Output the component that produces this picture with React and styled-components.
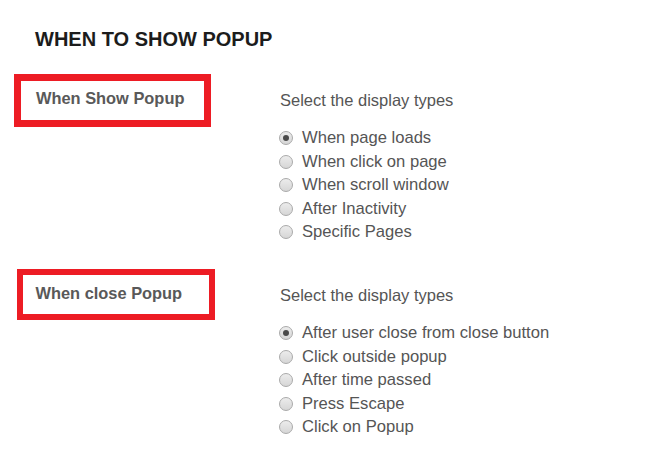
import React from "react";
import styled, { createGlobalStyle } from "styled-components";

const Global = createGlobalStyle`
  html, body { margin: 0; padding: 0; background: #fff; }
  body { font-family: "Liberation Sans", Arial, sans-serif; }
`;

const Page = styled.div`
  width: 647px;
  height: 456px;
  overflow: hidden;
  box-sizing: border-box;
  padding-top: 27px;
`;

const Title = styled.h2`
  margin: 0 0 0 35px;
  font-size: 20px;
  line-height: 24px;
  font-weight: 700;
  color: #1c1c1c;
`;

const Section = styled.section`
  display: flex;
  margin-top: ${(p) => p.$top}px;
`;

const LabelCol = styled.div`
  width: 280px;
  flex: none;
`;

const LabelBox = styled.div`
  box-sizing: border-box;
  margin-left: ${(p) => p.$left}px;
  width: ${(p) => p.$width}px;
  height: ${(p) => p.$height}px;
  border: ${(p) => p.$border}px solid #ed1c24;
  padding-top: ${(p) => p.$padTop}px;
  padding-left: ${(p) => 36 - p.$left - p.$border}px;
  font-size: 16.4px;
  line-height: 20px;
  font-weight: 700;
  color: #595959;
`;

const OptionsCol = styled.div`
  padding-top: 16px;
  display: flex;
  flex-direction: column;
`;

const Heading = styled.div`
  font-size: 16.5px;
  line-height: 20px;
  color: #555;
  margin-bottom: 16px;
`;

const List = styled.div`
  display: flex;
  flex-direction: column;
`;

const Option = styled.label`
  display: flex;
  align-items: center;
  font-size: 16.6px;
  line-height: 23.5px;
  color: #555;
`;

const Radio = styled.span`
  box-sizing: border-box;
  width: 14px;
  height: 14px;
  margin: 1px 9px 0 -1px;
  border-radius: 50%;
  border: 1px solid #aaaaaa;
  background: linear-gradient(#ececec, #d6d6d6);
  display: flex;
  align-items: center;
  justify-content: center;
  flex: none;
  &::after {
    content: "";
    display: ${(p) => (p.$checked ? "block" : "none")};
    width: 6px;
    height: 6px;
    border-radius: 50%;
    background: #4a4a4a;
  }
`;

const groups = [
  {
    label: "When Show Popup",
    top: 23,
    box: { left: 14, width: 197, height: 53, border: 7, padTop: 7 },
    options: [
      "When page loads",
      "When click on page",
      "When scroll window",
      "After Inactivity",
      "Specific Pages",
    ],
  },
  {
    label: "When close Popup",
    top: 25.5,
    box: { left: 17, width: 198, height: 51, border: 6.5, padTop: 8 },
    options: [
      "After user close from close button",
      "Click outside popup",
      "After time passed",
      "Press Escape",
      "Click on Popup",
    ],
  },
];

export default function App() {
  return (
    <>
      <Global />
      <Page>
        <Title>WHEN TO SHOW POPUP</Title>
        {groups.map((g) => (
          <Section key={g.label} $top={g.top}>
            <LabelCol>
              <LabelBox
                $left={g.box.left}
                $width={g.box.width}
                $height={g.box.height}
                $border={g.box.border}
                $padTop={g.box.padTop}
              >
                {g.label}
              </LabelBox>
            </LabelCol>
            <OptionsCol>
              <Heading>Select the display types</Heading>
              <List role="radiogroup">
                {g.options.map((o, i) => (
                  <Option key={o}>
                    <Radio role="radio" aria-checked={i === 0} $checked={i === 0} />
                    {o}
                  </Option>
                ))}
              </List>
            </OptionsCol>
          </Section>
        ))}
      </Page>
    </>
  );
}
